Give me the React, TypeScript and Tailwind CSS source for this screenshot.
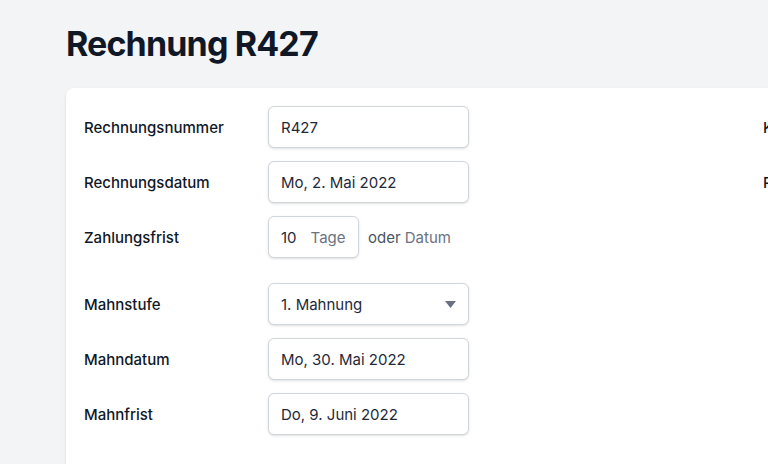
import React from 'react';

const font = { fontFamily: 'Inter, "Noto Sans", sans-serif' };

function Field({ label, children }: { label: string; children: React.ReactNode }) {
  return (
    <div className="flex items-center h-[42px]">
      <div className="w-[184px] shrink-0 pt-[2px] text-[15px] font-medium text-gray-900">{label}</div>
      {children}
    </div>
  );
}

function TextBox({ value }: { value: string }) {
  return (
    <div className="w-[201px] h-[42px] flex items-center px-3 pt-[2px] border border-gray-300 rounded-md bg-white text-[15px] text-gray-800 shadow-sm">
      {value}
    </div>
  );
}

export default function App() {
  return (
    <div className="w-[768px] h-[464px] overflow-hidden bg-gray-100" style={font}>
      <div className="pl-[66px] pt-[25px] w-[1200px]">
        <h1 className="text-[34px] leading-[38px] font-bold tracking-tight text-gray-900">Rechnung R427</h1>
        <div className="mt-[25px] bg-white rounded-lg shadow-sm h-[500px] pl-[18px] pt-[18px] flex">
          {/* left column */}
          <div className="w-[679px] shrink-0 flex flex-col">
            <div className="flex flex-col gap-[13px]">
              <Field label="Rechnungsnummer">
                <TextBox value="R427" />
              </Field>
              <Field label="Rechnungsdatum">
                <TextBox value="Mo, 2. Mai 2022" />
              </Field>
              <Field label="Zahlungsfrist">
                <div className="w-[91px] h-[42px] flex items-center px-3 pt-[2px] border border-gray-300 rounded-md bg-white text-[15px] shadow-sm">
                  <span className="text-gray-800">10</span>
                  <span className="ml-[14px] text-gray-500">Tage</span>
                </div>
                <span className="ml-[9px] pt-[2px] text-[15px] text-gray-600">
                  oder <span className="text-gray-500">Datum</span>
                </span>
              </Field>
            </div>
            <div className="mt-[25px] flex flex-col gap-[13px]">
              <Field label="Mahnstufe">
                <div className="w-[201px] h-[42px] flex items-center justify-between pl-3 pr-[12px] border border-gray-300 rounded-md bg-white text-[15px] text-gray-800 shadow-sm">
                  <span className="pt-[2px]">1. Mahnung</span>
                  <svg width="11" height="7" viewBox="0 0 11 7" className="text-gray-500">
                    <path d="M0 0h11L5.5 7z" fill="currentColor" />
                  </svg>
                </div>
              </Field>
              <Field label="Mahndatum">
                <TextBox value="Mo, 30. Mai 2022" />
              </Field>
              <Field label="Mahnfrist">
                <TextBox value="Do, 9. Juni 2022" />
              </Field>
            </div>
          </div>
          {/* right column */}
          <div className="flex flex-col gap-[13px]">
            <div className="h-[42px] pt-[2px] flex items-center text-[15px] font-medium text-gray-900">Kunde</div>
            <div className="h-[42px] pt-[2px] flex items-center text-[15px] font-medium text-gray-900">Rechnungsadresse</div>
          </div>
        </div>
      </div>
    </div>
  );
}
